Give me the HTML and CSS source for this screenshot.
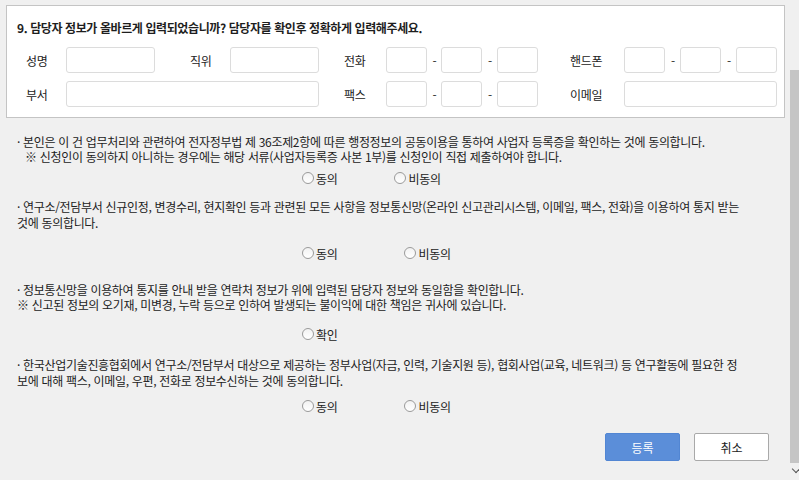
FILE: index.html
```html
<!DOCTYPE html>
<html lang="ko">
<head>
<meta charset="utf-8">
<link rel="stylesheet" href="styles.css">
</head>
<body>
<div class="page">
  <div class="card">
    <h2 class="title">9. 담당자 정보가 올바르게 입력되었습니까? 담당자를 확인후 정확하게 입력해주세요.</h2>
    <div class="form-grid">
      <span class="lbl lbl-a">성명</span><span class="box"></span>
      <span class="lbl lbl-b">직위</span><span class="box"></span>
      <span class="lbl lbl-c">전화</span><span class="box"></span><span class="dash">-</span><span class="box"></span><span class="dash">-</span><span class="box"></span>
      <span class="lbl lbl-d">핸드폰</span><span class="box"></span><span class="dash">-</span><span class="box"></span><span class="dash">-</span><span class="box"></span>

      <span class="lbl lbl-a">부서</span><span class="box wide-dept"></span>
      <span class="lbl lbl-c">팩스</span><span class="box"></span><span class="dash">-</span><span class="box"></span><span class="dash">-</span><span class="box"></span>
      <span class="lbl lbl-d">이메일</span><span class="box wide-mail"></span>
    </div>
  </div>

  <div class="agree">
    <p class="para p1">· 본인은 이 건 업무처리와 관련하여 전자정부법 제 36조제2항에 따른 행정정보의 공동이용을 통하여 사업자 등록증을 확인하는 것에 동의합니다.<br><span class="indent">※ 신청인이 동의하지 아니하는 경우에는 해당 서류(사업자등록증 사본 1부)를 신청인이 직접 제출하여야 합니다.</span></p>
    <div class="radios r1">
      <label class="opt"><span class="dot"></span>동의</label>
      <label class="opt opt-near"><span class="dot"></span>비동의</label>
    </div>

    <p class="para p2">· 연구소/전담부서 신규인정, 변경수리, 현지확인 등과 관련된 모든 사항을 정보통신망(온라인 신고관리시스템, 이메일, 팩스, 전화)을 이용하여 통지 받는<br>것에 동의합니다.</p>
    <div class="radios r2">
      <label class="opt"><span class="dot"></span>동의</label>
      <label class="opt opt-far"><span class="dot"></span>비동의</label>
    </div>

    <p class="para p3">· 정보통신망을 이용하여 통지를 안내 받을 연락처 정보가 위에 입력된 담당자 정보와 동일함을 확인합니다.<br>※ 신고된 정보의 오기재, 미변경, 누락 등으로 인하여 발생되는 불이익에 대한 책임은 귀사에 있습니다.</p>
    <div class="radios r3">
      <label class="opt"><span class="dot"></span>확인</label>
    </div>

    <p class="para p4">· 한국산업기술진흥협회에서 연구소/전담부서 대상으로 제공하는 정부사업(자금, 인력, 기술지원 등), 협회사업(교육, 네트워크) 등 연구활동에 필요한 정<br>보에 대해 팩스, 이메일, 우편, 전화로 정보수신하는 것에 동의합니다.</p>
    <div class="radios r4">
      <label class="opt"><span class="dot"></span>동의</label>
      <label class="opt opt-far"><span class="dot"></span>비동의</label>
    </div>
  </div>

  <div class="actions">
    <button class="btn btn-primary">등록</button>
    <button class="btn btn-cancel">취소</button>
  </div>

  <div class="scrollbar"><div class="thumb"></div><span class="arrow"></span></div>
</div>
</body>
</html>
```
FILE: styles.css
```css
* { box-sizing: border-box; }
html, body { margin: 0; padding: 0; }
body {
  background: #f0f0f0;
  font-family: "Noto Sans CJK KR", "Noto Sans", sans-serif;
  color: #222;
  font-size: 12px;
  width: 799px;
  height: 480px;
  overflow: hidden;
}
.page {
  position: relative;
  width: 799px;
  height: 480px;
  padding-top: 5px;
}
.card {
  margin-left: 6px;
  width: 779px;
  background: #fff;
  border: 1px solid #c4c4c4;
  padding: 14px 0 10px 10px;
}
.title {
  margin: 0 0 11px 0;
  font-size: 12px;
  line-height: 16px;
  font-weight: 700;
  color: #1e1e1e;
  letter-spacing: -0.4px;
}
.form-grid {
  display: grid;
  grid-template-columns: 49px 89px 75px 89px 67px 41px 14px 41px 15px 41px 86px 41px 15px 41px 15px 41px;
  grid-auto-rows: 26px;
  row-gap: 8px;
  align-items: center;
}
.lbl { font-size: 12px; color: #222; letter-spacing: -0.3px; }
.lbl-a { padding-left: 9px; }
.lbl-b { padding-left: 35px; }
.lbl-c { padding-left: 25px; }
.lbl-d { padding-left: 32px; }
.box {
  height: 26px;
  border: 1px solid #dcdcdc;
  border-radius: 3px;
  background: #fff;
}
.wide-dept { grid-column: 2 / 5; }
.wide-mail { grid-column: 12 / 17; }
.dash { text-align: center; color: #333; font-size: 12px; padding-left: 1px; }

.agree { padding-left: 17px; }
.para {
  margin: 0;
  font-size: 12px;
  line-height: 15px;
  letter-spacing: -0.32px;
  color: #222;
  white-space: nowrap;
}
.indent { padding-left: 8px; }
.p1 { margin-top: 16px; }
.p2 { margin-top: 13px; line-height: 16px; }
.p3 { margin-top: 21px; }
.p4 { margin-top: 15px; line-height: 16px; }
.radios {
  display: flex;
  align-items: center;
  height: 16px;
  padding-left: 285px;
  font-size: 12px;
  letter-spacing: -0.3px;
}
.r1 { margin-top: 6px; }
.r2 { margin-top: 14px; }
.r3 { margin-top: 14px; }
.r4 { margin-top: 9px; }
.opt { display: flex; align-items: center; gap: 2px; color: #222; }
.opt-near { margin-left: 57px; }
.opt-far { margin-left: 67px; }
.dot {
  width: 12px;
  height: 12px;
  border-radius: 50%;
  border: 1px solid #9a9a9a;
  background: linear-gradient(#f2f2f2, #ffffff);
}

.actions {
  display: flex;
  gap: 14px;
  padding-left: 605px;
  margin-top: 19px;
}
.btn {
  width: 75px;
  height: 28px;
  border-radius: 2px;
  font-family: "Noto Sans CJK KR", "Noto Sans", sans-serif;
  font-size: 12px;
  padding: 0;
}
.btn-primary { background: #5b8ed9; border: 1px solid #5286d3; color: #fff; }
.btn-cancel { background: #fff; border: 1px solid #a9a9a9; color: #222; }

.scrollbar {
  position: absolute;
  left: 790px;
  top: 0;
  width: 9px;
  height: 480px;
}
.thumb {
  position: absolute;
  left: 0;
  top: 70px;
  width: 9px;
  height: 393px;
  background: #c5c5c5;
}
.arrow {
  position: absolute;
  left: 3px;
  top: 466px;
  width: 6px;
  height: 6px;
  border-right: 1px solid #555;
  border-bottom: 1px solid #555;
  transform: rotate(45deg);
}
```
